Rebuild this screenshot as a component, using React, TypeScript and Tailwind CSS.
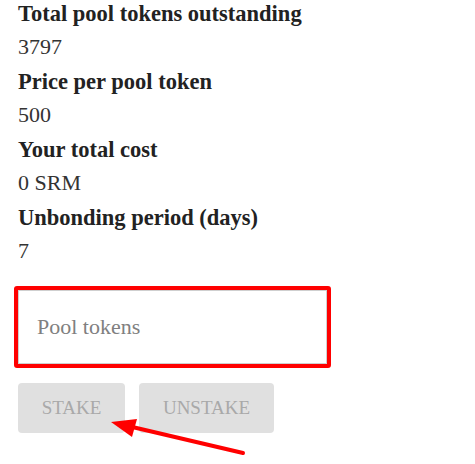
import React from "react";

const items = [
  { label: "Total pool tokens outstanding", value: "3797" },
  { label: "Price per pool token", value: "500" },
  { label: "Your total cost", value: "0 SRM" },
  { label: "Unbonding period (days)", value: "7" },
];

export default function App() {
  return (
    <div
      className="relative h-[464px] w-[475px] overflow-hidden bg-white pl-[18px]"
      style={{ fontFamily: '"Liberation Serif", "Times New Roman", serif' }}
    >
      <div className="flex flex-col">
        {items.map((it, i) => (
          <div key={it.label} className={i < items.length - 1 ? "mb-[8px]" : ""}>
            <div className="mb-[6px] text-[22.5px] font-bold leading-[27px] text-[#222222]">
              {it.label}
            </div>
            <div className="text-[22px] leading-[27px] text-[#333333]">{it.value}</div>
          </div>
        ))}
      </div>

      <div className="-ml-[4px] mt-[22px] w-[317px] rounded-[3px] border-4 border-[#ff0000]">
        <input
          type="text"
          placeholder="Pool tokens"
          className="block h-[74px] w-full border border-[#cfcfcf] bg-white pl-[18px] text-[22px] text-[#333] outline-none placeholder:text-[#808080]"
        />
      </div>

      <div className="mt-[15px] flex gap-[14px]">
        <button
          disabled
          className="flex h-[50px] w-[107px] items-center justify-center rounded-[4px] bg-[#e0e0e0] text-[19px] text-[#a9a9a9]"
        >
          STAKE
        </button>
        <button
          disabled
          className="flex h-[50px] w-[135px] items-center justify-center rounded-[4px] bg-[#e0e0e0] text-[19px] text-[#a9a9a9]"
        >
          UNSTAKE
        </button>
      </div>

      <svg
        className="pointer-events-none absolute left-0 top-0"
        width="475"
        height="464"
        viewBox="0 0 475 464"
      >
        <line x1="243" y1="453" x2="128" y2="426" stroke="#ff0000" strokeWidth="4" strokeLinecap="round" />
        <polygon points="111,422 137,419 132,437" fill="#ff0000" />
      </svg>
    </div>
  );
}
